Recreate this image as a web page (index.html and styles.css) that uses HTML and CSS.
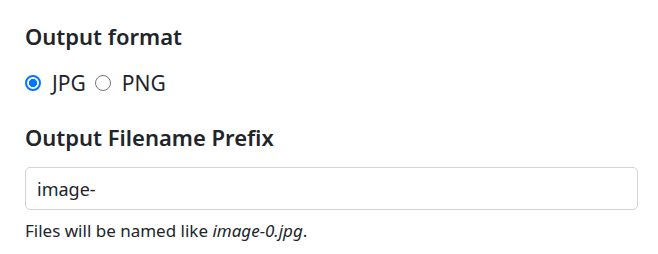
FILE: index.html
```html
<!DOCTYPE html>
<html>
<head>
<meta charset="utf-8">
<link rel="stylesheet" href="styles.css">
</head>
<body>
<div class="page">
  <h5 class="title">Output format</h5>
  <div class="radios">
    <label class="opt"><input type="radio" name="fmt" checked> JPG</label>
    <label class="opt"><input type="radio" name="fmt"> PNG</label>
  </div>
  <h5 class="title second">Output Filename Prefix</h5>
  <input class="field" type="text" value="image-">
  <p class="help">Files will be named like <em>image-0.jpg</em>.</p>
</div>
</body>
</html>
```

FILE: styles.css
```css
html, body {
  margin: 0;
  padding: 0;
  background: #fff;
}
.page {
  padding: 23px 20px 0 25px;
  font-family: "Noto Sans", "Open Sans", sans-serif;
  color: #212529;
}
.title {
  margin: 0;
  font-size: 22px;
  font-weight: 600;
  line-height: 26px;
}
.radios {
  margin-top: 20px;
  display: flex;
  align-items: center;
  font-size: 21px;
  line-height: 28px;
  color: #212529;
}
.opt {
  display: flex;
  align-items: center;
}
.opt input {
  appearance: none;
  -webkit-appearance: none;
  box-sizing: border-box;
  width: 16px;
  height: 16px;
  margin: 0 11px 0 0;
  border: 1.5px solid #767676;
  border-radius: 50%;
  background: #fff;
}
.opt input:checked {
  border: 2px solid #0075ff;
  background: radial-gradient(circle, #0075ff 0 3.8px, #fff 4.4px);
}
.opt + .opt input {
  margin-left: 9px;
}
.second {
  margin-top: 27px;
}
.field {
  display: block;
  box-sizing: border-box;
  width: 100%;
  height: 43px;
  margin-top: 17px;
  padding: 0 11px;
  border: 1px solid #ced4da;
  border-radius: 5px;
  font-family: inherit;
  font-size: 18px;
  color: #212529;
  outline: none;
}
.help {
  margin: 9px 0 0;
  font-size: 17px;
  line-height: 24px;
  color: #212529;
}
```
